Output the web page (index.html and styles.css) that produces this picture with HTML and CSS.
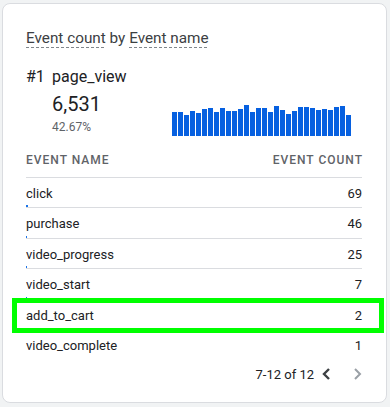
FILE: index.html
```html
<!DOCTYPE html>
<html lang="en">
<head>
    <meta charset="UTF-8">
    <meta name="viewport" content="width=device-width, initial-scale=1.0">
    <title>Event count by Event name</title>
    <link rel="stylesheet" href="styles.css">
</head>
<body>

<div class="card">
    <div class="title"><span class="dim">Event count</span> by <span class="dim">Event name</span></div>

    <div class="top-item"><span class="rank">#1</span>page_view</div>
    <div class="stats">
        <div class="figures">
            <div class="value">6,531</div>
            <div class="share">42.67%</div>
        </div>
        <div class="spark" id="spark"></div>
    </div>

    <div class="table">
        <div class="head"><span>Event name</span><span>Event count</span></div>
        <div class="row">
            <div class="row-main"><span>click</span><span>69</span></div>
            <div class="row-bar" style="width: 0.45%"></div>
        </div>
        <div class="row">
            <div class="row-main"><span>purchase</span><span>46</span></div>
            <div class="row-bar" style="width: 0.30%"></div>
        </div>
        <div class="row">
            <div class="row-main"><span>video_progress</span><span>25</span></div>
            <div class="row-bar" style="width: 0.16%"></div>
        </div>
        <div class="row">
            <div class="row-main"><span>video_start</span><span>7</span></div>
            <div class="row-bar" style="width: 0.05%"></div>
        </div>
        <div class="row highlight">
            <div class="row-main"><span>add_to_cart</span><span>2</span></div>
            <div class="row-bar" style="width: 0.01%"></div>
        </div>
        <div class="row">
            <div class="row-main"><span>video_complete</span><span>1</span></div>
            <div class="row-bar" style="width: 0.01%"></div>
        </div>
    </div>

    <div class="pager">
        <span class="range">7-12 of 12</span>
        <button class="page-btn">
            <svg viewBox="0 0 20 20" width="20" height="20"><polyline points="13,5 8,10 13,15"/></svg>
        </button>
        <button class="page-btn disabled">
            <svg viewBox="0 0 20 20" width="20" height="20"><polyline points="8,5 13,10 8,15"/></svg>
        </button>
    </div>
</div>

<script>
    // daily page_view counts, scaled to bar heights in px
    const days = [24, 24, 21, 25, 23, 27, 28, 24, 28, 25, 25, 27, 31, 24, 28,
                  28, 24, 30, 26, 22, 25, 29, 29, 28, 26, 27, 26, 29, 30, 21];
    const spark = document.getElementById('spark');

    days.forEach(h => {
        const bar = document.createElement('div');
        bar.className = 'bar';
        bar.style.height = h + 'px';
        spark.appendChild(bar);
    });
</script>

</body>
</html>
```

FILE: styles.css
```css
body {
    margin: 0;
    padding: 3px 3px 0 2px;
    background-color: #f1f3f4;
    font-family: Roboto, 'Liberation Sans', sans-serif;
    color: #3c4043;
}
.card {
    box-sizing: border-box;
    height: 400px;
    background: #fff;
    border: 1px solid #dadce0;
    border-radius: 8px;
    padding: 24px 24px 0 23px;
}
.title {
    font-size: 15.3px;
    line-height: 20px;
    color: #3c4043;
}
.title .dim {
    padding-bottom: 1px;
    background: repeating-linear-gradient(90deg, #80868b 0 3px, transparent 3px 5px) left bottom / 100% 1px no-repeat;
}
.top-item {
    margin-top: 19px;
    font-size: 16px;
    line-height: 20px;
    color: #202124;
}
.rank {
    display: inline-block;
    width: 26px;
}
.stats {
    display: flex;
    align-items: flex-end;
    margin-top: 5px;
}
.figures {
    width: 120px;
    padding-left: 26px;
}
.value {
    font-size: 20px;
    line-height: 24px;
    color: #202124;
}
.share {
    margin-top: 3px;
    font-size: 12px;
    line-height: 17px;
    color: #5f6368;
}
.spark {
    display: flex;
    align-items: flex-end;
    gap: 1px;
    height: 32px;
}
.bar {
    width: 5px;
    background-color: #0660e0;
}
.table {
    margin-top: 16px;
}
.head {
    display: flex;
    justify-content: space-between;
    padding-bottom: 9px;
    border-bottom: 1px solid #dadce0;
    font-size: 12px;
    line-height: 16px;
    font-weight: 500;
    letter-spacing: 1px;
    text-transform: uppercase;
    color: #5f6368;
}
.head span:last-child {
    margin-right: -1px;
}
.row {
    position: relative;
    height: 29.4px;
    border-bottom: 1px solid #dadce0;
}
.row:last-child {
    border-bottom: none;
}
.row-main {
    display: flex;
    justify-content: space-between;
    padding-top: 6px;
    font-size: 13px;
    line-height: 20px;
    color: #202124;
}
.row-bar {
    height: 2px;
    margin-top: 1.4px;
    background-color: #1a73e8;
}
.highlight::after {
    content: '';
    position: absolute;
    top: -2px;
    left: -14px;
    right: -22px;
    bottom: -4px;
    border: 5px solid #00ff00;
}
.pager {
    display: flex;
    justify-content: flex-end;
    align-items: center;
    margin-top: 5px;
    margin-right: -5px;
    height: 20px;
    font-size: 13px;
    color: #202124;
}
.range {
    margin-right: 2px;
}
.page-btn {
    display: flex;
    padding: 0;
    border: none;
    background: none;
    cursor: pointer;
}
.page-btn svg {
    fill: none;
    stroke: #3c4043;
    stroke-width: 2.4;
}
.page-btn + .page-btn {
    margin-left: 11px;
}
.page-btn.disabled {
    cursor: default;
}
.page-btn.disabled svg {
    stroke: #9aa0a6;
    stroke-width: 2;
}
```
